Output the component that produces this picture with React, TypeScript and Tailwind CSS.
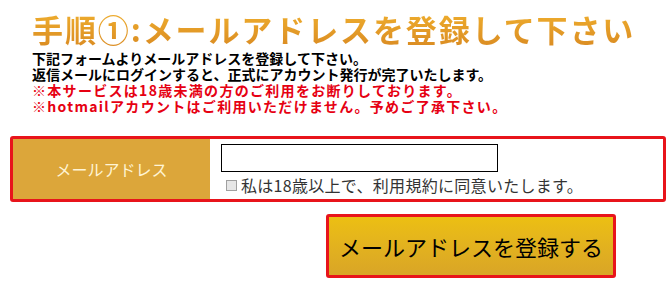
import React from "react";

export default function App() {
  const jp = { fontFamily: '"Noto Sans CJK JP", "Noto Sans", sans-serif' };
  return (
    <div className="w-[668px] h-[288px] bg-white overflow-hidden relative" style={jp}>
      <div className="pl-[32px] pt-[9px]">
        <h1 className="text-[31px] leading-[40px] font-bold tracking-[1.9px] bg-gradient-to-b from-[#f0b02e] to-[#d98a22] bg-clip-text text-transparent">
          手順①:メールアドレスを登録して下さい
        </h1>
        <div className="mt-[1px] text-[14px] leading-[16px] font-bold text-black">
          <p>下記フォームよりメールアドレスを登録して下さい。</p>
          <p>返信メールにログインすると、正式にアカウント発行が完了いたします。</p>
        </div>
        <div className="text-[14px] leading-[16px] font-bold tracking-[1.3px] text-[#e60012]">
          <p>※本サービスは18歳未満の方のご利用をお断りしております。</p>
          <p>※hotmailアカウントはご利用いただけません。予めご了承下さい。</p>
        </div>
      </div>
      <div className="mt-[22px] ml-[10px] w-[656px] h-[66px] border-[3px] border-[#e8141b] rounded-[3px] flex">
        <div className="w-[197px] bg-[#dca63a] flex items-center justify-center text-[16px] text-[#fff4d4]">
          メールアドレス
        </div>
        <div className="flex-1 bg-white pl-[11px] pt-[5px]">
          <input
            type="text"
            className="block w-[277px] h-[28px] border border-black outline-none bg-white"
          />
          <label className="flex items-center mt-[2px] text-[16px] leading-[22px] tracking-[0.3px] text-[#333]">
            <span className="inline-block w-[11px] h-[11px] border border-[#a0a0a0] bg-[#e6e6e6] ml-[5px] mr-[4px]"></span>
            私は18歳以上で、利用規約に同意いたします。
          </label>
        </div>
      </div>
      <div className="mt-[12px] flex justify-start pl-[326px]">
        <button className="w-[290px] h-[64px] border-[3px] border-[#e8141b] rounded-[3px] bg-gradient-to-b from-[#ecbf12] to-[#d9a526] text-[22px] text-black flex items-center justify-center">
          メールアドレスを登録する
        </button>
      </div>
    </div>
  );
}
